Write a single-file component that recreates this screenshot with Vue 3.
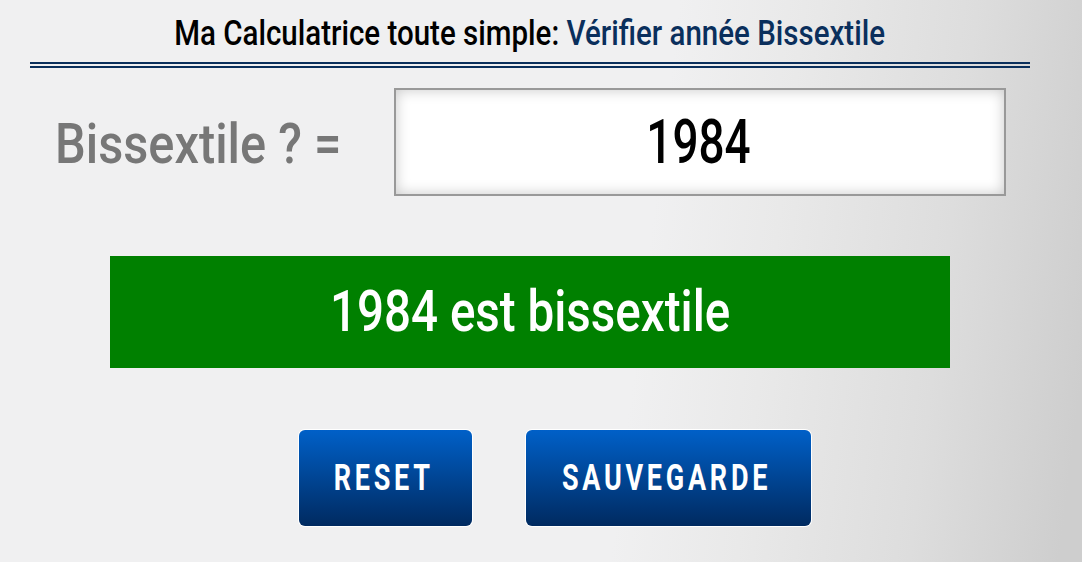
<script setup>
const year = 1984
</script>

<template>
  <div class="page">
    <h1 class="title">
      <span class="title-text">Ma Calculatrice toute simple: <span class="title-accent">Vérifier année Bissextile</span></span>
    </h1>

    <div class="input-row">
      <label class="input-label"><span class="label-text">Bissextile ? =</span></label>
      <div class="year-input"><span class="year-text">{{ year }}</span></div>
    </div>

    <div class="result"><span class="result-text">{{ year }} est bissextile</span></div>

    <div class="actions">
      <button class="btn btn-reset"><span class="btn-text">RESET</span></button>
      <button class="btn btn-save"><span class="btn-text">SAUVEGARDE</span></button>
    </div>
  </div>
</template>

<style>
html,
body {
  height: 100%;
}

body {
  overflow: hidden;
  background: linear-gradient(97deg, #f0f0f1 0%, #f0f0f1 59%, #e9e9e9 70%, #dddddd 85%, #cecece 98%, #cecece 100%);
}
</style>

<style scoped>
.page {
  width: 1000px;
  margin-left: 30px;
  font-family: "Roboto", sans-serif;
}

.title-text,
.label-text,
.year-text,
.result-text,
.btn-text {
  display: inline-block;
  white-space: nowrap;
}

.title {
  height: 62px;
  margin: 0;
  border-bottom: 6px double #0a2f5c;
  font-size: 35px;
  font-weight: 500;
  line-height: 68px;
  text-align: center;
  white-space: nowrap;
  color: #000;
}

.title-text {
  transform: scaleX(0.843);
}

.title-accent {
  color: #0a2f5c;
}

.input-row {
  display: flex;
  align-items: center;
  margin-top: 20px;
}

.input-label {
  width: 364px;
  padding: 3px 0 0 25px;
  box-sizing: border-box;
  font-size: 56px;
  font-weight: 500;
  color: #777;
}

.label-text {
  transform: scaleX(0.87);
  transform-origin: left center;
}

.year-input {
  width: 612px;
  height: 108px;
  box-sizing: border-box;
  border: 2px solid #999;
  box-shadow: inset 0 0 14px rgba(0, 0, 0, 0.22);
  background: #fff;
  font-size: 62px;
  font-weight: 500;
  line-height: 104px;
  text-align: center;
  color: #000;
}

.year-text {
  margin-right: 3px;
  transform: scaleX(0.74);
}

.result {
  width: 840px;
  height: 112px;
  margin: 60px 0 0 80px;
  background: #008000;
  font-size: 58px;
  font-weight: 500;
  line-height: 110px;
  text-align: center;
  color: #fff;
}

.result-text {
  transform: scaleX(0.82);
}

.actions {
  display: flex;
  gap: 54px;
  margin: 62px 0 0 269px;
}

.btn {
  height: 96px;
  padding: 0;
  border: 0;
  border-radius: 6px;
  box-shadow: 0 0 0 1px #fff;
  background: linear-gradient(to bottom, #0060c8, #002a60);
  font-family: inherit;
  font-size: 36px;
  font-weight: 700;
  letter-spacing: 5px;
  color: #fff;
}

.btn-text {
  margin-right: 4px;
  transform: scaleX(0.75);
}

.btn-reset {
  width: 173px;
}

.btn-save {
  width: 285px;
}
</style>
